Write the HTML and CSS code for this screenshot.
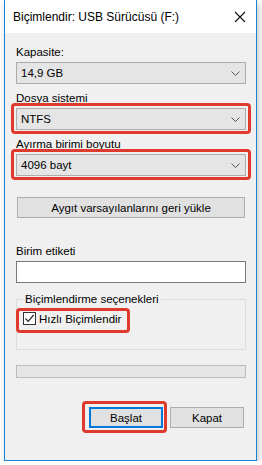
FILE: index.html
```html
<!DOCTYPE html>
<html lang="tr">
<head>
    <meta charset="UTF-8">
    <meta name="viewport" content="width=device-width, initial-scale=1.0">
    <title>Biçimlendir: USB Sürücüsü (F:)</title>
    <link rel="stylesheet" href="styles.css">
</head>
<body>
    <div class="window">
        <!-- başlık çubuğu -->
        <div class="titlebar">
            <span class="title">Biçimlendir: USB Sürücüsü (F:)</span>
            <svg class="close" width="12" height="12" viewBox="0 0 12 12">
                <path d="M1 1 L11 11 M11 1 L1 11" stroke="#111" stroke-width="1.1" fill="none"/>
            </svg>
        </div>

        <div class="content">
            <div class="field first">
                <div class="label">Kapasite:</div>
                <div class="combo"><span>14,9 GB</span><svg class="chev" width="9" height="5" viewBox="0 0 9 5"><path d="M0.5 0.5 L4.5 4.5 L8.5 0.5" stroke="#555" fill="none"/></svg></div>
            </div>

            <div class="field">
                <div class="label">Dosya sistemi</div>
                <div class="combo mark"><span>NTFS</span><svg class="chev" width="9" height="5" viewBox="0 0 9 5"><path d="M0.5 0.5 L4.5 4.5 L8.5 0.5" stroke="#555" fill="none"/></svg></div>
            </div>

            <div class="field">
                <div class="label">Ayırma birimi boyutu</div>
                <div class="combo mark"><span>4096 bayt</span><svg class="chev" width="9" height="5" viewBox="0 0 9 5"><path d="M0.5 0.5 L4.5 4.5 L8.5 0.5" stroke="#555" fill="none"/></svg></div>
            </div>

            <button class="btn restore">Aygıt varsayılanlarını geri yükle</button>

            <div class="field label-field">
                <div class="label">Birim etiketi</div>
                <input class="textbox" type="text" value="">
            </div>

            <fieldset class="group">
                <legend>Biçimlendirme seçenekleri</legend>
                <label class="check mark">
                    <span class="box">
                        <svg width="11" height="11" viewBox="0 0 11 11">
                            <path d="M1.5 5.5 L4.2 8.3 L9.6 2" stroke="#222" stroke-width="1.2" fill="none"/>
                        </svg>
                    </span>
                    Hızlı Biçimlendir
                </label>
            </fieldset>

            <div class="progress"></div>

            <div class="actions">
                <button class="btn default mark">Başlat</button>
                <button class="btn">Kapat</button>
            </div>
        </div>
    </div>
</body>
</html>
```

FILE: styles.css
```css
body {
    margin: 0;
    background: #fff;
    font-family: "Liberation Sans", Arial, sans-serif;
    font-size: 11.5px;
    color: #000;
}
.window {
    margin-left: 4px;
    width: 251px;
    height: 460px;
    border: 1px solid #1883d7;
    border-top: none;
    background: #f0f0f0;
    box-shadow: 2px 3px 7px rgba(0, 0, 0, 0.22);
}
.titlebar {
    height: 33px;
    background: #fff;
    display: flex;
    align-items: center;
    justify-content: space-between;
    padding: 0 10px 0 8px;
}
.title {
    font-size: 12px;
    color: #000;
}
.close {
    margin-top: 1px;
}
.content {
    padding: 0 10px 0 11px;
    display: flex;
    flex-direction: column;
}
.field {
    margin-top: 7px;
}
.field.first {
    margin-top: 12px;
}
.label {
    height: 14px;
    line-height: 14px;
    margin-bottom: 3px;
}
.combo {
    height: 20px;
    border: 1px solid #acacac;
    background: #e5e5e5;
    display: flex;
    align-items: center;
    justify-content: space-between;
    padding: 0 5px 0 4px;
}
.chev {
    display: block;
}

/* kırmızı vurgular */
.mark {
    position: relative;
}
.mark::after {
    content: "";
    position: absolute;
    left: -6px;
    right: -6px;
    top: -6px;
    bottom: -5px;
    border: 3px solid #e03a2e;
    border-radius: 4px;
}

.btn {
    font-family: inherit;
    font-size: 11.5px;
    color: #000;
    background: #e1e1e1;
    border: 1px solid #adadad;
    height: 21px;
    padding: 0;
}
.restore {
    margin: 21px 1px 0 1px;
}
.field.label-field {
    margin-top: 26px;
}
.textbox {
    display: block;
    box-sizing: border-box;
    width: 100%;
    height: 22px;
    border: 1px solid #7a7a7a;
    background: #fff;
    margin: 0;
}
.group {
    margin: 10px 0 0 0;
    padding: 4px 6px 14px 6px;
    border: 1px solid #dcdcdc;
    height: 57px;
    box-sizing: border-box;
}
.group legend {
    padding: 0 2px;
    margin-left: 0;
}
.check {
    display: inline-flex;
    align-items: center;
    gap: 3px;
    height: 13px;
    margin-top: 3px;
    white-space: nowrap;
}
.check::after {
    left: -7px;
    right: -9px;
    top: -4px;
    bottom: -8px;
}
.box {
    flex: none;
    width: 11px;
    height: 11px;
    border: 1px solid #333;
    background: #fff;
    display: inline-flex;
}
.progress {
    margin-top: 15px;
    height: 11px;
    border: 1px solid #bcbcbc;
    background: #e6e6e6;
}
.actions {
    margin-top: 29px;
    display: flex;
    justify-content: flex-end;
    gap: 7px;
    padding-right: 2px;
}
.actions .btn {
    width: 74px;
}
.btn.default {
    border: 2px solid #0078d7;
}
.btn.default::after {
    left: -9px;
    right: -6px;
    top: -8px;
    bottom: -7px;
}
```
